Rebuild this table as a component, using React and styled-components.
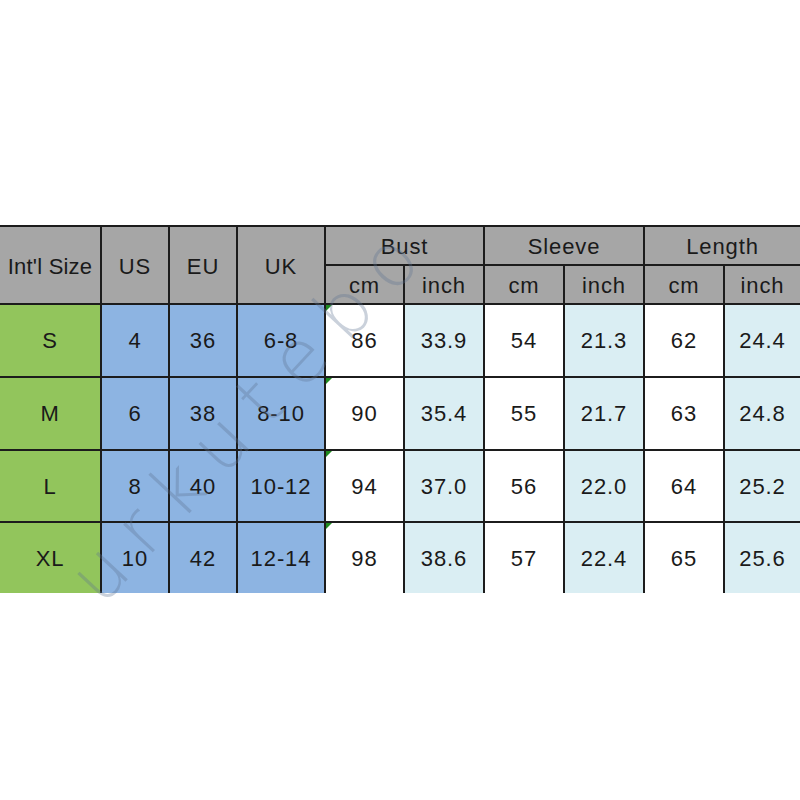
import React from "react";
import styled, { createGlobalStyle, css } from "styled-components";

const GlobalStyle = createGlobalStyle`
  html, body {
    margin: 0;
    padding: 0;
    background: #ffffff;
  }
  body {
    font-family: "Liberation Sans", Arial, sans-serif;
    color: #1a1a1a;
  }
`;

const Page = styled.div`
  width: 800px;
  height: 800px;
  padding-top: 225px;
  box-sizing: border-box;
  overflow: hidden;
`;

const Chart = styled.div`
  position: relative;
`;

/* lines are the grid background showing through the gaps */
const SizeGrid = styled.div`
  display: grid;
  grid-template-columns: 100px 66px 66px 86px 77px 78px 78px 78px 78px 75px;
  grid-template-rows: 37px 37px 71px 71px 70px 70px;
  gap: 2px;
  border-top: 2px solid #1c1c1c;
  background: #1c1c1c;
`;

const fills = {
  head: "#a6a6a6",
  size: "#92c55c",
  conv: "#8db4e2",
  cm: "#ffffff",
  inch: "#daeef3",
};

const Cell = styled.div`
  position: relative;
  display: flex;
  align-items: center;
  justify-content: center;
  padding-top: ${(p) => (p.$tone === "head" ? "3px" : "1px")};
  box-sizing: border-box;
  background: ${(p) => fills[p.$tone]};
  font-size: 22px;
  letter-spacing: ${(p) => (p.$tight ? "0.2px" : "0.9px")};
  white-space: nowrap;
  grid-row: ${(p) => p.$rows || "auto"};
  grid-column: ${(p) => p.$cols || "auto"};

  ${(p) =>
    p.$flag &&
    css`
      &::before {
        content: "";
        position: absolute;
        left: 0;
        top: 0;
        border-top: 6px solid #1f8a1f;
        border-right: 6px solid transparent;
      }
    `}
`;

const Watermark = styled.span`
  position: absolute;
  left: 250px;
  top: 185px;
  transform: translate(-50%, -50%) rotate(-47deg);
  font-family: "DejaVu Sans", sans-serif;
  font-weight: 200;
  font-size: 74px;
  letter-spacing: 20px;
  color: rgba(95, 115, 145, 0.33);
  pointer-events: none;
  white-space: nowrap;
`;

const rows = [
  ["S", "4", "36", "6-8", "86", "33.9", "54", "21.3", "62", "24.4"],
  ["M", "6", "38", "8-10", "90", "35.4", "55", "21.7", "63", "24.8"],
  ["L", "8", "40", "10-12", "94", "37.0", "56", "22.0", "64", "25.2"],
  ["XL", "10", "42", "12-14", "98", "38.6", "57", "22.4", "65", "25.6"],
];

const tones = ["size", "conv", "conv", "conv", "cm", "inch", "cm", "inch", "cm", "inch"];

export default function App() {
  return (
    <>
      <GlobalStyle />
      <Page>
        <Chart>
          <SizeGrid>
            <Cell $tone="head" $rows="span 2" $tight>
              Int'l Size
            </Cell>
            <Cell $tone="head" $rows="span 2">US</Cell>
            <Cell $tone="head" $rows="span 2">EU</Cell>
            <Cell $tone="head" $rows="span 2">UK</Cell>
            <Cell $tone="head" $cols="span 2">Bust</Cell>
            <Cell $tone="head" $cols="span 2">Sleeve</Cell>
            <Cell $tone="head" $cols="span 2">Length</Cell>
            {["cm", "inch", "cm", "inch", "cm", "inch"].map((u, i) => (
              <Cell key={i} $tone="head">
                {u}
              </Cell>
            ))}
            {rows.map((row) =>
              row.map((v, i) => (
                <Cell key={row[0] + i} $tone={tones[i]} $flag={i === 4}>
                  {v}
                </Cell>
              ))
            )}
          </SizeGrid>
          <Watermark>urkutebo</Watermark>
        </Chart>
      </Page>
    </>
  );
}
